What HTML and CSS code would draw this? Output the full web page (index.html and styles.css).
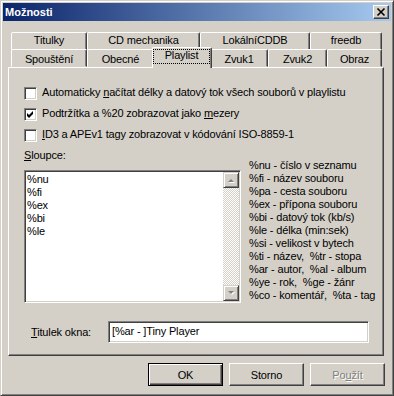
FILE: index.html
```html
<html lang="cs">
<head>
    <meta charset="UTF-8">
    <title>Možnosti</title>
    <link rel="stylesheet" href="styles.css">
</head>
<body>
    <div class="window">
        <div class="caption">
            <span class="caption-title">Možnosti</span>
            <div class="caption-close">
                <svg width="14" height="12" viewBox="0 0 14 12">
                    <path d="M3.5 2.5 L10.5 9.5 M10.5 2.5 L3.5 9.5" stroke="#000" stroke-width="1.6"/>
                </svg>
            </div>
        </div>

        <div class="client">
            <div class="tabs">
                <div class="tab-row row-back">
                    <div class="tab" style="width: 76px;">Titulky</div>
                    <div class="tab" style="width: 113px;">CD mechanika</div>
                    <div class="tab" style="width: 110px;">LokálníCDDB</div>
                    <div class="tab" style="width: 72px;">freedb</div>
                </div>
                <div class="tab-row row-front">
                    <div class="tab" style="width: 76px;">Spouštění</div>
                    <div class="tab" style="width: 67px;">Obecné</div>
                    <div class="tab selected" style="width: 60px;"><span class="focus">Playlist</span></div>
                    <div class="tab" style="width: 58px;">Zvuk1</div>
                    <div class="tab" style="width: 59px;">Zvuk2</div>
                    <div class="tab" style="width: 55px;">Obraz</div>
                </div>
            </div>

            <div class="panel">
                <div class="option">
                    <span class="checkbox"></span>
                    <span class="option-text">Automaticky <u>n</u>ačítat délky a datový tok všech souborů v playlistu</span>
                </div>
                <div class="option">
                    <span class="checkbox">
                        <svg width="9" height="9" viewBox="0 0 9 9">
                            <path d="M1 3 L3 5 L7 1 L7 4 L3 8 L1 6 Z" fill="#000"/>
                        </svg>
                    </span>
                    <span class="option-text">Podtržítka a %20 zobrazovat jako <u>m</u>ezery</span>
                </div>
                <div class="option">
                    <span class="checkbox"></span>
                    <span class="option-text"><u>I</u>D3 a APEv1 tagy zobrazovat v kódování ISO-8859-1</span>
                </div>

                <div class="columns">
                    <div class="columns-left">
                        <div class="columns-label"><u>S</u>loupce:</div>
                        <div class="listbox">
                            <div class="list-items">
                                <div class="list-item">%nu</div>
                                <div class="list-item">%fi</div>
                                <div class="list-item">%ex</div>
                                <div class="list-item">%bi</div>
                                <div class="list-item">%le</div>
                            </div>
                            <div class="scrollbar">
                                <div class="scroll-btn">
                                    <svg width="7" height="5" viewBox="0 0 7 5">
                                        <path d="M4 2 L7 5 L1 5 Z" fill="#fff"/>
                                        <path d="M3 1 L6 4 L0 4 Z" fill="#808080"/>
                                    </svg>
                                </div>
                                <div class="scroll-track"></div>
                                <div class="scroll-btn">
                                    <svg width="7" height="5" viewBox="0 0 7 5">
                                        <path d="M1 1 L7 1 L4 4 Z" fill="#fff"/>
                                        <path d="M0 0 L6 0 L3 3 Z" fill="#808080"/>
                                    </svg>
                                </div>
                            </div>
                        </div>
                    </div>
                    <div class="legend">
                        <div>%nu - číslo v seznamu</div>
                        <div>%fi - název souboru</div>
                        <div>%pa - cesta souboru</div>
                        <div>%ex - přípona souboru</div>
                        <div>%bi - datový tok (kb/s)</div>
                        <div>%le - délka (min:sek)</div>
                        <div>%si - velikost v bytech</div>
                        <div>%ti - název,&nbsp; %tr - stopa</div>
                        <div>%ar - autor,&nbsp; %al - album</div>
                        <div>%ye - rok,&nbsp; %ge - žánr</div>
                        <div>%co - komentář,&nbsp; %ta - tag</div>
                    </div>
                </div>

                <div class="title-row">
                    <label class="title-label"><u>T</u>itulek okna:</label>
                    <div class="field">[%ar - ]Tiny Player</div>
                </div>
            </div>

            <div class="buttons">
                <button class="btn default">OK</button>
                <button class="btn">Storno</button>
                <button class="btn disabled">Po<u>u</u>žít</button>
            </div>
        </div>
    </div>
</body>
</html>
```

FILE: styles.css
```css
* {
    box-sizing: border-box;
}
body {
    margin: 0;
    font-family: "Liberation Sans", Arial, sans-serif;
    font-size: 11px;
    letter-spacing: -0.15px;
    color: #000;
    background-color: #D4D0C8;
}
.window {
    width: 394px;
    height: 396px;
    padding: 2px;
    border: 1px solid;
    border-color: #D4D0C8 #404040 #404040 #D4D0C8;
    box-shadow: inset 1px 1px #fff, inset -1px -1px #808080;
    background-color: #D4D0C8;
}
.caption {
    display: flex;
    align-items: center;
    justify-content: space-between;
    height: 18px;
    padding: 0 2px;
    background: linear-gradient(to right, #0A246A, #A6CAF0);
}
.caption-title {
    color: #fff;
    font-weight: bold;
    letter-spacing: 0;
    line-height: 18px;
}
.caption-close {
    display: flex;
    align-items: center;
    justify-content: center;
    width: 16px;
    height: 14px;
    border: 1px solid;
    border-color: #fff #404040 #404040 #fff;
    box-shadow: inset -1px -1px #808080;
    background-color: #D4D0C8;
}
.client {
    padding: 11px 6px 0 5px;
}
.tabs {
    padding-left: 3px;
}
.tab-row {
    display: flex;
}
.row-back {
    height: 17px;
}
.row-front {
    height: 18px;
}
.tab {
    flex: none;
    border: 1px solid transparent;
    border-color: #fff #404040 transparent #fff;
    border-radius: 2px 2px 0 0;
    box-shadow: inset -1px 0 #808080;
    background-color: #D4D0C8;
    text-align: center;
    white-space: nowrap;
}
.row-back .tab {
    line-height: 15px;
    height: 18px;
}
.row-front .tab {
    line-height: 17px;
    height: 18px;
    padding-top: 1px;
}
.tab.selected {
    position: relative;
    z-index: 1;
    height: 21px;
    margin: -2px -2px 0;
    padding: 1px 0 0;
    border-bottom: none;
}
.focus {
    display: block;
    height: 15px;
    line-height: 13px;
    margin: 0 1px 0 0;
    outline: 1px dotted #000;
    outline-offset: -1px;
}
.panel {
    height: 289px;
    margin-right: 1px;
    padding: 16px 0 0 15px;
    border: 1px solid;
    border-color: #fff #404040 #404040 #fff;
    box-shadow: inset -1px -1px #808080;
}
.option {
    display: flex;
    align-items: flex-start;
    height: 21px;
}
.checkbox {
    display: flex;
    align-items: center;
    justify-content: center;
    width: 13px;
    height: 13px;
    margin-top: 3px;
    margin-right: 5px;
    border: 1px solid;
    border-color: #808080 #fff #fff #808080;
    box-shadow: inset 1px 1px #404040, inset -1px -1px #D4D0C8;
    background-color: #fff;
}
.option-text {
    line-height: 13px;
    margin-top: 2px;
    white-space: nowrap;
}
.columns {
    display: flex;
}
.columns-left {
    width: 217px;
}
.columns-label {
    margin-top: 2px;
    line-height: 13px;
}
.listbox {
    display: flex;
    height: 133px;
    margin-top: 8px;
    padding: 1px;
    border: 1px solid;
    border-color: #808080 #fff #fff #808080;
    box-shadow: inset 1px 1px #404040, inset -1px -1px #D4D0C8;
    background-color: #fff;
}
.list-items {
    flex: 1;
    padding: 1px 0 0 1px;
}
.list-item {
    line-height: 13px;
}
.scrollbar {
    display: flex;
    flex-direction: column;
    width: 16px;
}
.scroll-btn {
    display: flex;
    align-items: center;
    justify-content: center;
    height: 16px;
    border: 1px solid;
    border-color: #D4D0C8 #404040 #404040 #D4D0C8;
    box-shadow: inset 1px 1px #fff, inset -1px -1px #808080;
    background-color: #D4D0C8;
}
.scroll-track {
    flex: 1;
    background: repeating-conic-gradient(#fff 0 25%, #D4D0C8 0 50%) 0 0 / 2px 2px;
}
.legend {
    margin: 12px 0 0 8px;
    line-height: 13px;
    white-space: nowrap;
}
.title-row {
    display: flex;
    align-items: center;
    margin-top: 18px;
    padding-left: 7px;
}
.title-label {
    width: 77px;
}
.field {
    width: 261px;
    height: 22px;
    padding: 0 3px;
    line-height: 18px;
    border: 1px solid;
    border-color: #808080 #fff #fff #808080;
    box-shadow: inset 1px 1px #404040, inset -1px -1px #D4D0C8;
    background-color: #fff;
}
.buttons {
    display: flex;
    justify-content: flex-end;
    gap: 6px;
    margin-top: 7px;
}
.btn {
    width: 75px;
    height: 23px;
    padding: 0;
    font-family: inherit;
    font-size: 11px;
    letter-spacing: inherit;
    color: #000;
    border: 1px solid;
    border-color: #fff #404040 #404040 #fff;
    box-shadow: inset -1px -1px #808080;
    background-color: #D4D0C8;
}
.btn.default {
    border-color: #000;
    box-shadow: inset 1px 1px #fff, inset -1px -1px #404040, inset -2px -2px #808080;
}
.btn.disabled {
    color: #808080;
    text-shadow: 1px 1px #fff;
}
```
